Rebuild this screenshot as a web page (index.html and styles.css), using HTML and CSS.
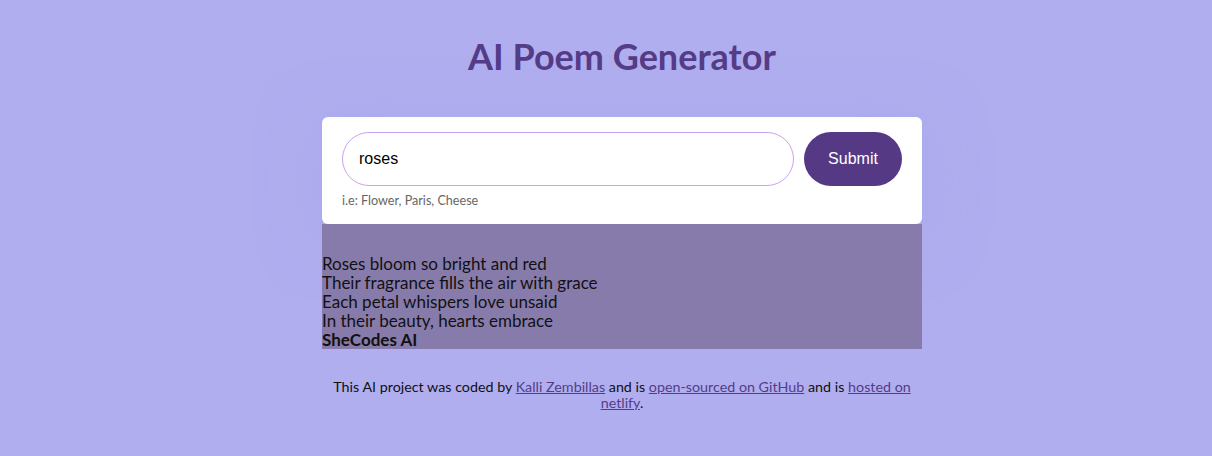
FILE: index.html
```html
<!DOCTYPE html>
<html lang="en">
<head>
<meta charset="utf-8">
<title>AI Poem Generator</title>
<link rel="stylesheet" href="styles.css">
</head>
<body>
<div class="container">
  <h1 class="title">AI Poem Generator</h1>
  <div class="form-card">
    <form class="search-form">
      <input class="search-input" type="text" value="roses">
      <button class="submit-btn" type="button">Submit</button>
    </form>
    <div class="hint">i.e: Flower, Paris, Cheese</div>
  </div>
  <div class="poem">
    <div>Roses bloom so bright and red<br>Their fragrance fills the air with grace<br>Each petal whispers love unsaid<br>In their beauty, hearts embrace<br><strong>SheCodes AI</strong></div>
  </div>
  <footer class="footer">
    This AI project was coded by <a href="#">Kalli Zembillas</a> and is <a href="#">open-sourced on GitHub</a> and is <a href="#">hosted on netlify</a>.
  </footer>
</div>
</body>
</html>
```
FILE: styles.css
```css
body {
  margin: 0;
  padding-left: 32px;
  background: #b0aeef;
  font-family: "Lato", "DejaVu Sans", sans-serif;
  color: #111;
}
.container {
  width: 600px;
  margin: 0 auto;
  padding-top: 35px;
}
.title {
  margin: 0 0 40px;
  text-align: center;
  font-size: 36px;
  line-height: 42px;
  font-weight: bold;
  color: #553c88;
}
.form-card {
  background: #fff;
  border-radius: 6px;
  padding: 15px 20px 16px;
  box-shadow: 0 10px 60px rgba(165, 160, 235, 0.5);
  position: relative;
  z-index: 1;
}
.search-form {
  display: flex;
  gap: 10px;
  margin: 0;
}
.search-input {
  flex: 1;
  height: 54px;
  box-sizing: border-box;
  border: 1px solid #c9a3ee;
  border-radius: 27px;
  padding: 0 16px;
  font-family: "Liberation Sans", Arial, sans-serif;
  font-size: 16px;
  color: #000;
  outline: none;
}
.submit-btn {
  width: 98px;
  height: 54px;
  border: none;
  border-radius: 27px;
  background: #553985;
  color: #fff;
  font-family: "Liberation Sans", Arial, sans-serif;
  font-size: 16px;
}
.hint {
  margin-top: 8px;
  font-size: 12.6px;
  line-height: 14px;
  color: #666;
}
.poem {
  position: relative;
  z-index: 2;
  background: #877bab;
  padding-top: 30px;
  font-size: 17px;
  line-height: 19px;
  color: #111;
}
.footer {
  margin-top: 30px;
  text-align: center;
  font-size: 14.3px;
  line-height: 16px;
}
.footer a {
  color: #553c88;
}
```
